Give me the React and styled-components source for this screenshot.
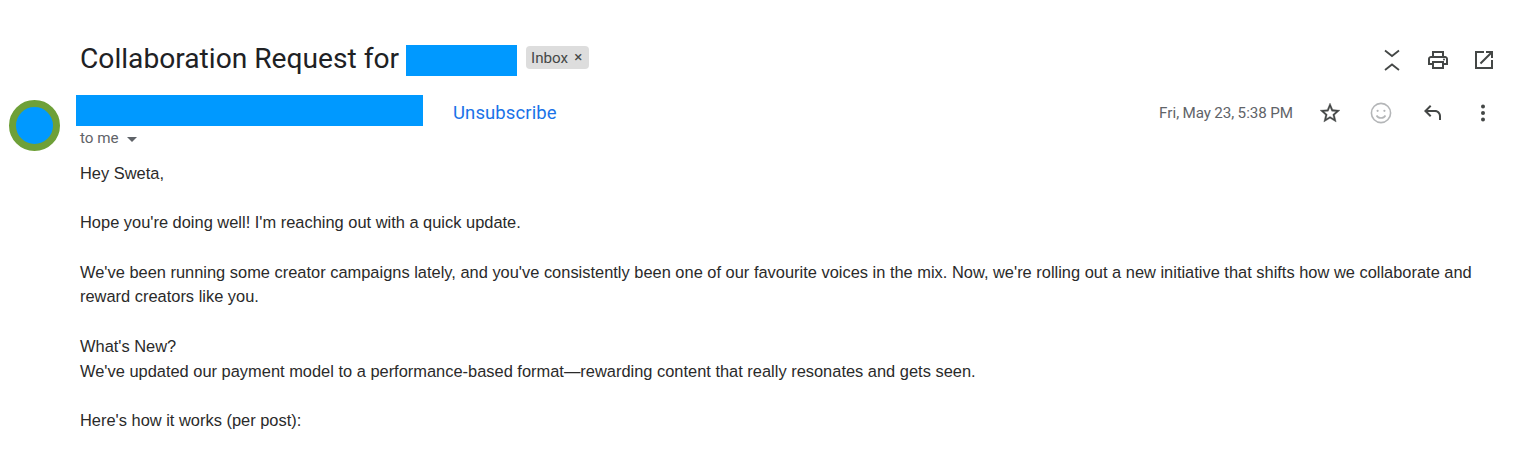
import React from "react";
import styled, { createGlobalStyle } from "styled-components";

const GlobalStyle = createGlobalStyle`
  html, body {
    margin: 0;
    padding: 0;
    background: #ffffff;
  }
`;

const Page = styled.div`
  width: 1515px;
  height: 469px;
  overflow: hidden;
  box-sizing: border-box;
  padding: 44px 20px 0 9px;
  display: grid;
  grid-template-columns: 51px 1fr;
  align-content: start;
  column-gap: 16px;
  font-family: Roboto, "Liberation Sans", sans-serif;
`;

const SubjectRow = styled.div`
  grid-column: 1 / 3;
  display: flex;
  align-items: center;
  height: 33px;
  padding-left: 71px;
`;

const Subject = styled.h1`
  margin: 0 0 4px;
  font-size: 28.16px;
  font-weight: 400;
  color: #202124;
  line-height: 33px;
  white-space: nowrap;
`;

const Redacted = styled.span`
  display: block;
  flex: none;
  background: #0099ff;
  width: ${(p) => p.$w}px;
  height: ${(p) => p.$h}px;
`;

const Chip = styled.span`
  display: flex;
  align-items: center;
  gap: 6px;
  margin: 0 0 6px 9px;
  height: 23px;
  padding: 0 7px 0 5px;
  border-radius: 4px;
  background: #dddddd;
  color: #444746;
  font-size: 15.2px;
`;

const ChipClose = styled.span`
  font-size: 15px;
  line-height: 1;
`;

const SubjectTools = styled.div`
  margin: 0 -1px 2px auto;
  display: flex;
  align-items: center;
  gap: 22px;
`;

const Avatar = styled.div`
  width: 51px;
  height: 51px;
  margin-top: 23px;
  box-sizing: border-box;
  border: 7px solid #6ea038;
  border-radius: 50%;
  background: #0099ff;
`;

const Main = styled.div`
  min-width: 0;
`;

const SenderRow = styled.div`
  display: flex;
  align-items: center;
  margin-top: 18px;
  height: 31px;
`;

const Unsubscribe = styled.a`
  margin-left: 30px;
  margin-top: 4px;
  color: #1a73e8;
  font-size: 18.5px;
  font-weight: 400;
  letter-spacing: 0.1px;
`;

const MessageMeta = styled.div`
  margin-left: auto;
  display: flex;
  align-items: center;
  margin-top: 5px;
`;

const DateText = styled.span`
  color: #5f6368;
  font-size: 15.2px;
  margin-right: 25px;
  word-spacing: -0.5px;
`;

const MetaIcons = styled.div`
  display: flex;
  align-items: center;
  gap: 27px;
`;

const ToLine = styled.div`
  display: flex;
  align-items: center;
  gap: 8px;
  height: 24px;
  margin-left: 4px;
  color: #5f6368;
  font-size: 15.2px;
`;

const Caret = styled.span`
  width: 0;
  height: 0;
  margin-top: 2px;
  border-left: 5.5px solid transparent;
  border-right: 5.5px solid transparent;
  border-top: 5px solid #5f6368;
`;

const Body = styled.div`
  margin: 11px 0 0 4px;
  font-family: "Liberation Sans", Arial, sans-serif;
  font-size: 16.43px;
  line-height: 24.7px;
  color: #2a2a2a;
`;

const Para = styled.p`
  margin: 0 0 24.7px;
`;

const CollapseIcon = () => (
  <svg width="24" height="24" viewBox="0 0 24 24" fill="none" stroke="#444746" strokeWidth="1.8">
    <path d="M5 2.500l7 5.500 7-5.500M5 22l7-5.500 7 5.500" />
  </svg>
);

const PrintIcon = () => (
  <svg width="24" height="24" viewBox="0 0 24 24" fill="#444746">
    <path d="M19 8h-1V3H6v5H5c-1.66 0-3 1.34-3 3v6h4v4h12v-4h4v-6c0-1.66-1.34-3-3-3zM8 5h8v3H8V5zm8 14H8v-4h8v4zm4-4h-2v-2H6v2H4v-4c0-.55.45-1 1-1h14c.55 0 1 .45 1 1v4z" />
    <circle cx="18" cy="11.5" r="1" />
  </svg>
);

const PopoutIcon = () => (
  <svg width="24" height="24" viewBox="0 0 24 24" fill="#444746">
    <path d="M19 19H5V5h7V3H3v18h18v-9h-2v7zM14 3v2h3.59l-9.83 9.83 1.41 1.41L19 6.41V10h2V3h-7z" />
  </svg>
);

const StarIcon = () => (
  <svg width="24" height="24" viewBox="0 0 24 24" fill="#444746" stroke="#444746" strokeWidth="0.3">
    <path d="M22 9.24l-7.19-.62L12 2 9.19 8.63 2 9.24l5.46 4.73L5.82 21 12 17.27 18.18 21l-1.63-7.03L22 9.24zM12 15.4l-3.76 2.27 1-4.28-3.32-2.88 4.38-.38L12 6.1l1.71 4.04 4.38.38-3.32 2.88 1 4.28L12 15.4z" />
  </svg>
);

const EmojiIcon = () => (
  <svg width="24" height="24" viewBox="0 0 24 24" fill="none" stroke="#b4b6b8" strokeWidth="1.6">
    <circle cx="12" cy="12" r="9.6" />
    <circle cx="8.6" cy="9.8" r="1.1" fill="#b4b6b8" stroke="none" />
    <circle cx="15.4" cy="9.8" r="1.1" fill="#b4b6b8" stroke="none" />
    <path d="M7.5 14.5c1 1.7 2.6 2.5 4.5 2.5s3.500-.8 4.500-2.500" />
  </svg>
);

const ReplyIcon = () => (
  <svg width="24" height="24" viewBox="0 0 24 24" fill="#444746">
    <path d="M21 19h-2v-4c0-2.200-1.800-4-4-4H7.830l3.590 3.590L10 16l-6-6 6-6 1.420 1.410L7.830 9H15c3.310 0 6 2.690 6 6v4z" />
  </svg>
);

const MoreIcon = () => (
  <svg width="24" height="24" viewBox="0 0 24 24" fill="#444746">
    <circle cx="12" cy="5.500" r="2" />
    <circle cx="12" cy="12" r="2" />
    <circle cx="12" cy="18.500" r="2" />
  </svg>
);

const App = () => {
  return (
    <Page>
      <GlobalStyle />
      <SubjectRow>
        <Subject>Collaboration Request for&nbsp;</Subject>
        <Redacted $w={111} $h={31} />
        <Chip>
          Inbox
          <ChipClose>×</ChipClose>
        </Chip>
        <SubjectTools>
          <CollapseIcon />
          <PrintIcon />
          <PopoutIcon />
        </SubjectTools>
      </SubjectRow>
      <Avatar />
      <Main>
        <SenderRow>
          <Redacted $w={347} $h={31} />
          <Unsubscribe>Unsubscribe</Unsubscribe>
          <MessageMeta>
            <DateText>Fri, May 23, 5:38 PM</DateText>
            <MetaIcons>
              <StarIcon />
              <EmojiIcon />
              <ReplyIcon />
              <MoreIcon />
            </MetaIcons>
          </MessageMeta>
        </SenderRow>
        <ToLine>
          to me
          <Caret />
        </ToLine>
        <Body>
          <Para>Hey Sweta,</Para>
          <Para>Hope you're doing well! I'm reaching out with a quick update.</Para>
          <Para>
            We've been running some creator campaigns lately, and you've consistently been one of our
            favourite voices in the mix. Now, we're rolling out a new initiative that shifts how we
            collaborate and reward creators like you.
          </Para>
          <Para>
            What's New?
            <br />
            We've updated our payment model to a performance-based format—rewarding content that really
            resonates and gets seen.
          </Para>
          <Para>Here's how it works (per post):</Para>
        </Body>
      </Main>
    </Page>
  );
};

export default App;
